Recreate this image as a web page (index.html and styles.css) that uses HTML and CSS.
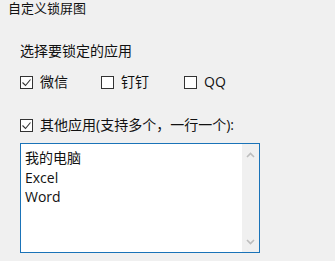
FILE: index.html
```html
<!DOCTYPE html>
<html lang="zh-CN">
<head>
  <meta charset="UTF-8">
  <title>自定义锁屏图</title>
  <link rel="stylesheet" href="styles.css">
</head>
<body>
  <div class="title">自定义锁屏图</div>

  <div class="panel">
    <div class="heading">选择要锁定的应用</div>

    <div class="apps">
      <label class="check">
        <span class="box"><svg width="11" height="11" viewBox="0 0 11 11"><polyline points="1.5,5.5 4.5,8.5 9.5,2.5" fill="none" stroke="#333" stroke-width="1.1"/></svg></span>
        微信
      </label>
      <label class="check">
        <span class="box"></span>
        钉钉
      </label>
      <label class="check">
        <span class="box"></span>
        QQ
      </label>
    </div>

    <label class="check other">
      <span class="box"><svg width="11" height="11" viewBox="0 0 11 11"><polyline points="1.5,5.5 4.5,8.5 9.5,2.5" fill="none" stroke="#333" stroke-width="1.1"/></svg></span>
      其他应用(支持多个，一行一个):
    </label>

    <div class="textbox">
      <div class="lines">
        <div>我的电脑</div>
        <div>Excel</div>
        <div>Word</div>
      </div>
      <div class="scrollbar">
        <svg width="9" height="6" viewBox="0 0 9 6"><polyline points="1,5 4.5,1.5 8,5" fill="none" stroke="#bdbdbd" stroke-width="1.6"/></svg>
        <svg width="9" height="6" viewBox="0 0 9 6"><polyline points="1,1 4.5,4.5 8,1" fill="none" stroke="#bdbdbd" stroke-width="1.6"/></svg>
      </div>
    </div>
  </div>
</body>
</html>
```

FILE: styles.css
```css
body {
  margin: 0;
  background-color: #f0f0f0;
  color: #111;
  font-family: "Open Sans", "Noto Sans CJK SC", sans-serif;
  font-size: 14px;
}
.title {
  padding-left: 8px;
  font-size: 13px;
  line-height: 17px;
  height: 20px;
}
.panel {
  padding: 0 20px;
}
.heading {
  margin-top: 21px;
  line-height: 20px;
}
.apps {
  display: grid;
  grid-template-columns: 81px 83px auto;
  margin-top: 11px;
}
.check {
  display: flex;
  align-items: center;
  gap: 7px;
  height: 20px;
  line-height: 20px;
}
.box {
  width: 11px;
  height: 11px;
  border: 1px solid #333;
  background-color: #fff;
  display: flex;
}
.other {
  margin-top: 23px;
}
.textbox {
  margin-top: 8px;
  width: 238px;
  height: 108px;
  border: 1px solid #1a73b8;
  background-color: #fff;
  display: flex;
}
.lines {
  flex: 1;
  padding: 4px 0 0 4px;
  line-height: 19.5px;
}
.scrollbar {
  width: 17px;
  background-color: #f0f0f0;
  display: flex;
  flex-direction: column;
  justify-content: space-between;
  align-items: center;
  padding: 8px 0 7px;
}
```
